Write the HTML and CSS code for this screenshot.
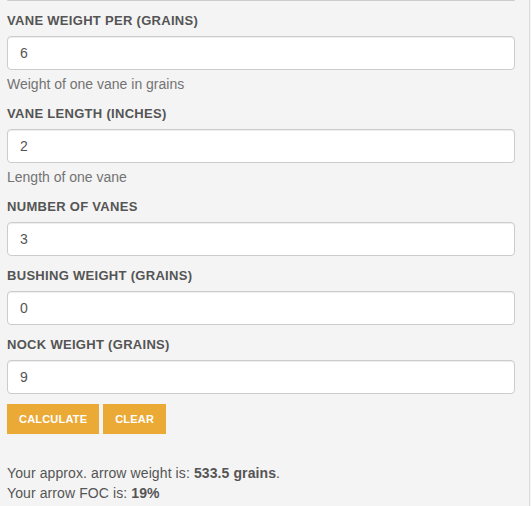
FILE: index.html
```html
<!DOCTYPE html>
<html>
<head>
<meta charset="utf-8">
<link rel="stylesheet" href="styles.css">
</head>
<body>
<div class="panel">
  <div class="prev-input"></div>
  <div class="group">
    <label class="label">Vane Weight Per (grains)</label>
    <input class="input" type="text" value="6">
    <div class="help">Weight of one vane in grains</div>
  </div>
  <div class="group">
    <label class="label">Vane Length (inches)</label>
    <input class="input" type="text" value="2">
    <div class="help">Length of one vane</div>
  </div>
  <div class="group">
    <label class="label">Number of Vanes</label>
    <input class="input" type="text" value="3">
  </div>
  <div class="group">
    <label class="label">Bushing Weight (grains)</label>
    <input class="input" type="text" value="0">
  </div>
  <div class="group">
    <label class="label">Nock Weight (grains)</label>
    <input class="input" type="text" value="9">
  </div>
  <div class="buttons">
    <button class="btn">Calculate</button>
    <button class="btn">Clear</button>
  </div>
  <div class="result">
    <div>Your approx. arrow weight is: <b>533.5 grains</b>.</div>
    <div>Your arrow FOC is: <b>19%</b></div>
  </div>
</div>
</body>
</html>
```
FILE: styles.css
```css
html, body {
  margin: 0;
  padding: 0;
  background: #f4f4f4;
  font-family: "Liberation Sans", Arial, sans-serif;
  color: #555;
}
.panel {
  width: 508px;
  padding: 0 14px 20px 7px;
  border-right: 1px solid #dcdcdc;
  min-height: 486px;
}
.prev-input {
  height: 0;
  border-bottom: 1px solid #ccc;
  border-radius: 0 0 4px 4px;
}
.group {
  margin-top: 10px;
}
.label {
  display: block;
  font-size: 13px;
  font-weight: bold;
  letter-spacing: 0.3px;
  text-transform: uppercase;
  line-height: 20px;
  margin-bottom: 5px;
  color: #555;
}
.input {
  display: block;
  box-sizing: border-box;
  width: 508px;
  height: 34px;
  margin: 0;
  padding: 6px 12px;
  font-family: inherit;
  font-size: 14px;
  color: #555;
  background: #fff;
  border: 1px solid #ccc;
  border-radius: 4px;
  box-shadow: inset 0 1px 1px rgba(0,0,0,0.075);
}
.help {
  margin-top: 5px;
  font-size: 14px;
  line-height: 19px;
  color: #737373;
}
.buttons {
  display: flex;
  gap: 4px;
  margin-top: 10px;
}
.btn {
  height: 30px;
  padding: 0 12px;
  border: none;
  border-radius: 0;
  background: #eba935;
  color: #fff;
  font-family: inherit;
  font-size: 11px;
  letter-spacing: 0.2px;
  font-weight: bold;
  text-transform: uppercase;
}
.result {
  margin-top: 29px;
  font-size: 14px;
  line-height: 20px;
  letter-spacing: 0.1px;
  color: #555;
}
```
